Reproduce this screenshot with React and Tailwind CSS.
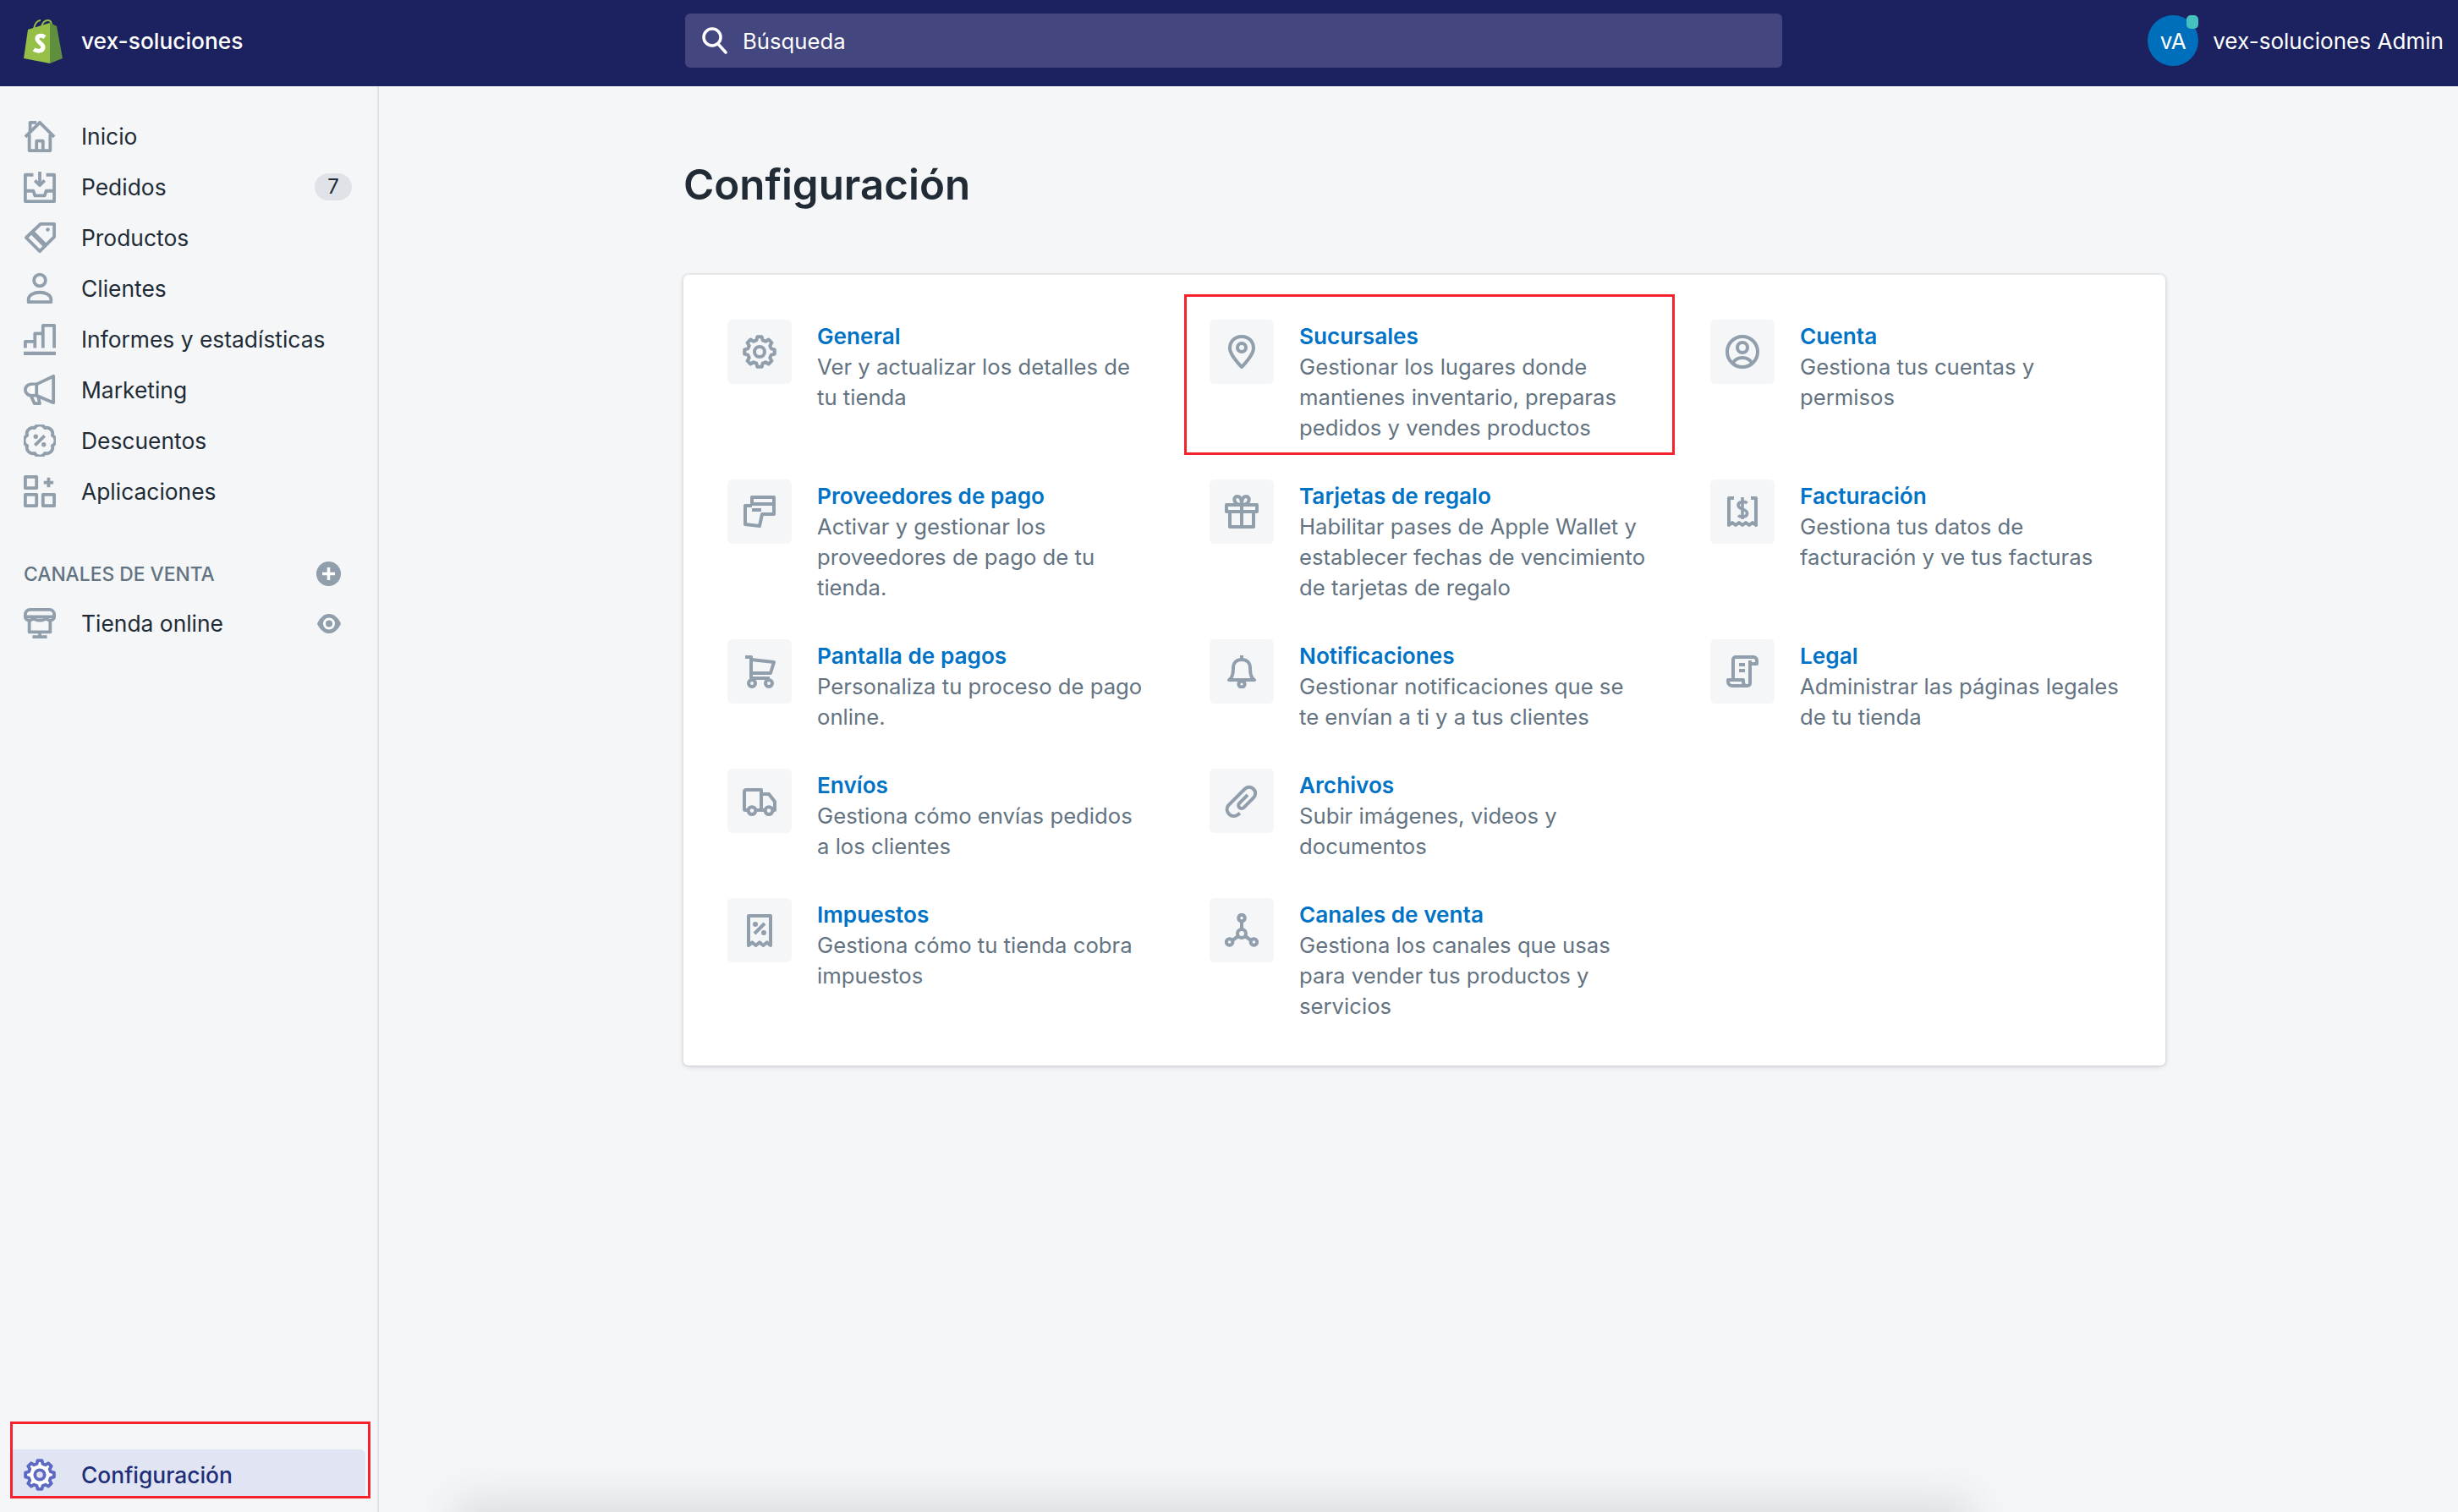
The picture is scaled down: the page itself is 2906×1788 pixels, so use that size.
import React from 'react';

// 8-tooth cog used by General and Configuración
const gearPath = (() => {
  const pts = [];
  for (let i = 0; i < 8; i++) {
    const a = (i * Math.PI) / 4;
    [[-0.26, 7.1], [-0.15, 9], [0.15, 9], [0.26, 7.1]].forEach(([o, r]) => {
      pts.push(`${(10 + r * Math.sin(a + o)).toFixed(2)} ${(10 - r * Math.cos(a + o)).toFixed(2)}`);
    });
  }
  return 'M' + pts.join(' L') + ' Z';
})();

const Ico = ({ children, size = 38, className = 'text-[#919eab]' }) => (
  <svg
    viewBox="0 0 20 20"
    width={size}
    height={size}
    fill="none"
    stroke="currentColor"
    strokeWidth="2"
    strokeLinejoin="round"
    className={`shrink-0 ${className}`}
  >
    {children}
  </svg>
);

const dot = (cx, cy, r = 1.2) => <circle cx={cx} cy={cy} r={r} fill="currentColor" stroke="none" />;

const Glyphs = {
  home: <><path d="M1 10.5 10 1.5l9 9" /><path d="M4 7.5V1.5h4" /><path d="M3.5 9v10h13V9" /><path d="M8 19v-6h4v6" /></>,
  orders: <><path d="M6 2.5H1V19h18V2.5h-5" /><path d="M1 12.5h5l1 3h6l1-3h5" /><path d="M10 0.5V9M7 6l3 3 3-3" /></>,
  tag: <><path d="M1.5 10 10.5 1.5H19V9.5L10 18.5Z" /><path d="M5 6.5 13.5 15" strokeWidth="3" />{dot(15, 5)}</>,
  customers: <><circle cx="10" cy="5" r="3.6" /><path d="M3 18.5h14V17c0-3-3.5-4.5-7-4.5S3 14 3 17Z" /></>,
  reports: <><path d="M1 15.5v-4h6v-5h5V1.500h7V15.500M7 11.500v4M12 6.500v9" /><path d="M0.500 19h19" strokeWidth="2.500" strokeLinecap="round" /></>,
  marketing: <><path d="M18.5 1.5V18L8 13.5H4.5a3.5 3.5 0 0 1 0-7H8Z" /><path d="M4.5 7.5 8 7v5.5H4.5Z" fill="#fff" stroke="none" /><path d="M8 6.5v7M4.5 13.5l2.2 5H10l-1-4.5" /></>,
  discounts: <><path d="M6.8 2.2a3.6 3.6 0 0 1 6.4 0 3.6 3.6 0 0 1 4.6 4.6 3.6 3.6 0 0 1 0 6.4 3.6 3.6 0 0 1-4.6 4.6 3.6 3.6 0 0 1-6.4 0 3.6 3.6 0 0 1-4.6-4.6 3.6 3.6 0 0 1 0-6.4 3.6 3.6 0 0 1 4.6-4.6Z" /><path d="M7 13l6-6" />{dot(7.5, 7.5, 1.4)}{dot(12.5, 12.5, 1.4)}</>,
  apps: <><rect x="1" y="1" width="7" height="7" /><rect x="1" y="12" width="7" height="7" /><rect x="12" y="12" width="7" height="7" /><path d="M15.5 1.5v6M12.5 4.5h6" /></>,
  store: <><path d="M4 1.5h12a3 3 0 0 1 3 3V6H1V4.5a3 3 0 0 1 3-3Z" /><path d="M6 6c0 3-5 3-5 0M14 6c0 3 5 3 5 0M6 6c0 3 8 3 8 0" /><path d="M3.5 9v6.5h13V9M10 15.5v3M5.5 18.5h9" /></>,
  gear: <><path d={gearPath} /><circle cx="10" cy="10" r="3" /></>,
  pin: <><path d="M10 1C5.5 1 3 4.3 3 8c0 4 7 11 7 11s7-7 7-11c0-3.7-2.5-7-7-7Z" /><circle cx="10" cy="7.5" r="2.5" /></>,
  account: <><circle cx="10" cy="10" r="9" /><circle cx="10" cy="7.5" r="3" /><path d="M4.5 16.5c1.5-2.5 3.5-3 5.5-3s4 .5 5.5 3" /></>,
  payment: <><path d="M5.5 6V1.5h13V11.5h-7L10 18.5l-8.5-1V6.5h4" /><path d="M5.5 5.5h13M5.5 9H11" /></>,
  gift: <><path d="M1 6h18v4H1Z" /><path d="M3 10v9h14v-9M10 6v13" /><path d="M10 6C5 6 4.5 1 7.5 1 9.5 1 10 4 10 6c0-2 .5-5 2.5-5C15.5 1 15 6 10 6Z" /></>,
  billing: <><path d="M5 2H2v16l2-1.5 2 1.5 2-1.5 2 1.5 2-1.5 2 1.5 2-1.5 2 1.5V2h-3" /><path d="M12.8 5C11.5 3.8 7.5 3.8 7.5 6.3c0 2.7 5.3 1.8 5.3 4.7 0 2.5-3.8 2.5-5.3 1.3M10 1.5v13" strokeWidth="1.8" /></>,
  legal: <><path d="M16.5 1.5H6A1.5 1.5 0 0 0 4.5 3v12" /><path d="M16.5 1.5a2 2 0 0 1 2 2v2h-4M14.5 3.5V17a1.5 1.5 0 0 1-1.5 1.5H4A2.5 2.5 0 0 1 1.5 16v-1h9v1.5a2 2 0 0 0 2 2" /><path d="M8 6h3.5M8 9.5h3.5" /></>,
  cart: <><path d="M1.5 1.5H5V14h11" /><path d="M5 3l13.5 1.5L16.5 11H5" /><circle cx="5.5" cy="17" r="2" /><circle cx="15.5" cy="17" r="2" /></>,
  truck: <><path d="M3.5 15.5H1.5A.5.5 0 0 1 1 15V4.5A1 1 0 0 1 2 3.5h9v12H7.5" /><path d="M11 6h4.5l3.5 4.5V15.5h-1.5M13.5 15.5H11" /><circle cx="5.5" cy="15.8" r="2.2" /><circle cx="15.5" cy="15.8" r="2.2" /></>,
  taxes: <><path d="M3.5 1.5h13V19l-2.2-1.8-2.1 1.8-2.2-1.8L7.8 19l-2.1-1.8L3.5 19Z" /><path d="M7 12l6-6" />{dot(7.5, 6.5, 1.5)}{dot(12.5, 11.5, 1.5)}</>,
  bell: <><path d="M10 .5V3" /><path d="M2.5 15c2-1 2.5-3.5 2.5-7 0-3 2-5 5-5s5 2 5 5c0 3.5.5 6 2.5 7Z" /><circle cx="10" cy="17.5" r="1.8" /></>,
  clip: <path d="M9 17.3 7.6 18.3A4 4 0 0 1 2 12.8L11.8 3A3.6 3.6 0 0 1 17 8.2L11.3 13.9A1.8 1.8 0 0 1 8.6 11.4L13.5 6.5" />,
  channels: <><circle cx="10" cy="2.8" r="1.9" /><circle cx="2.8" cy="17" r="1.9" /><circle cx="17.2" cy="17" r="1.9" /><circle cx="10" cy="12" r="2.5" /><path d="M10 4.7v4.8M4.5 16l3.5-2.5M15.5 16 12 13.5" /></>,
};

const navItems = [
  { label: 'Inicio', icon: 'home' },
  { label: 'Pedidos', icon: 'orders', badge: '7' },
  { label: 'Productos', icon: 'tag' },
  { label: 'Clientes', icon: 'customers' },
  { label: 'Informes y estadísticas', icon: 'reports' },
  { label: 'Marketing', icon: 'marketing' },
  { label: 'Descuentos', icon: 'discounts' },
  { label: 'Aplicaciones', icon: 'apps' },
];

const settings = [
  { title: 'General', icon: 'gear', lines: ['Ver y actualizar los detalles de', 'tu tienda'] },
  { title: 'Sucursales', icon: 'pin', lines: ['Gestionar los lugares donde', 'mantienes inventario, preparas', 'pedidos y vendes productos'], marked: true },
  { title: 'Cuenta', icon: 'account', lines: ['Gestiona tus cuentas y', 'permisos'] },
  { title: 'Proveedores de pago', icon: 'payment', lines: ['Activar y gestionar los', 'proveedores de pago de tu', 'tienda.'] },
  { title: 'Tarjetas de regalo', icon: 'gift', lines: ['Habilitar pases de Apple Wallet y', 'establecer fechas de vencimiento', 'de tarjetas de regalo'] },
  { title: 'Facturación', icon: 'billing', lines: ['Gestiona tus datos de', 'facturación y ve tus facturas'] },
  { title: 'Pantalla de pagos', icon: 'cart', lines: ['Personaliza tu proceso de pago', 'online.'] },
  { title: 'Notificaciones', icon: 'bell', lines: ['Gestionar notificaciones que se', 'te envían a ti y a tus clientes'] },
  { title: 'Legal', icon: 'legal', lines: ['Administrar las páginas legales', 'de tu tienda'] },
  { title: 'Envíos', icon: 'truck', lines: ['Gestiona cómo envías pedidos', 'a los clientes'] },
  { title: 'Archivos', icon: 'clip', lines: ['Subir imágenes, videos y', 'documentos'] },
  { title: '', lines: [] },
  { title: 'Impuestos', icon: 'taxes', lines: ['Gestiona cómo tu tienda cobra', 'impuestos'] },
  { title: 'Canales de venta', icon: 'channels', lines: ['Gestiona los canales que usas', 'para vender tus productos y', 'servicios'] },
];

const ShopifyLogo = () => (
  <svg viewBox="0 0 46 52" width="46" height="52" className="shrink-0 mt-[2px]">
    <path d="M12 11C13 4 17 1 20 1M21 9c1-5 4-8 8-8 3 0 4 3 4 7" fill="none" stroke="#95bf47" strokeWidth="2" />
    <path d="M0 46 5 12 31 4V52Z" fill="#95bf47" />
    <path d="M31 4 39 8 46 46 31 52Z" fill="#5e8e3e" />
    <path d="M25 21c-4-3-10-2-9 2.5s8 5 7 10c-1 4.5-7 4.5-11 2" fill="none" stroke="#fff" strokeWidth="5" />
  </svg>
);

const TopBar = () => (
  <header className="h-[102px] shrink-0 bg-[#1c2260] flex items-center pb-[6px] text-white">
    <div className="w-[810px] shrink-0 pl-7 flex items-center gap-[22px]">
      <ShopifyLogo />
      <span className="pt-[2px] text-[26.3px] font-medium">vex-soluciones</span>
    </div>
    <div className="w-[1297px] h-16 rounded-md bg-[#43467f] flex items-center pl-5 gap-[18px]">
      <svg viewBox="0 0 30 32" width="30" height="32" fill="none" stroke="#fff" strokeWidth="3.5" strokeLinecap="round" className="shrink-0">
        <circle cx="12" cy="12" r="10" />
        <path d="M19 20l9 10" />
      </svg>
      <span className="pt-[2px] text-[25.7px]">Búsqueda</span>
    </div>
    <div className="ml-auto pr-[17px] flex items-center gap-[17px]">
      <div className="relative w-[60px] h-[60px] rounded-full bg-[#006fbb] flex items-center justify-center pt-[2px] text-[26.1px]">
        vA
        <span className="absolute top-0 right-0 w-[14px] h-4 rounded-[5px] bg-[#47c1bf]" />
      </div>
      <span className="pt-[2px] text-[26.1px]">vex-soluciones Admin</span>
    </div>
  </header>
);

const NavRow = ({ label, icon, badge }) => (
  <div className="h-[60px] flex items-center pl-7 pr-[30px] text-[26.4px] text-[#212b36]">
    <Ico>{Glyphs[icon]}</Ico>
    <span className="ml-[30px] pt-[1px]">{label}</span>
    {badge && (
      <span className="ml-auto w-11 h-8 rounded-full bg-[#dfe3e8] flex items-center justify-center text-2xl">{badge}</span>
    )}
  </div>
);

const Sidebar = () => (
  <aside className="w-[448px] shrink-0 border-r-2 border-[#dfe3e8] flex flex-col pt-[29px] pb-[18px]">
    {navItems.map((item) => (
      <NavRow key={item.label} {...item} />
    ))}
    <div className="mt-[52px] h-[30px] flex items-center pl-7 pr-[43px] text-[22.8px] font-medium text-[#637381]">
      <span className="pt-[2px]">CANALES DE VENTA</span>
      <svg viewBox="0 0 29 29" width="29" height="29" className="ml-auto">
        <circle cx="14.5" cy="14.5" r="14.5" fill="#919eab" />
        <path d="M14.5 7v15M7 14.5h15" stroke="#fff" strokeWidth="3.5" />
      </svg>
    </div>
    <div className="mt-[14px] h-[60px] flex items-center pl-7 pr-[43px] text-[26.4px] text-[#212b36]">
      <Ico>{Glyphs.store}</Ico>
      <span className="ml-[30px] pt-[1px]">Tienda online</span>
      <svg viewBox="0 0 28 23" width="28" height="23" className="ml-auto">
        <path d="M14 0C6 0 1.5 8 0 11.5 1.5 15 6 23 14 23s12.5-8 14-11.5C26.5 8 22 0 14 0Z" fill="#919eab" />
        <circle cx="14" cy="11.5" r="7" fill="#fff" />
        <circle cx="14" cy="11.5" r="4" fill="#919eab" />
      </svg>
    </div>

    <div className="relative mt-auto ml-[15px] mr-[14px] h-[56px] rounded-tr-md bg-[#e1e4f3] flex items-center pl-[13px] pt-[4px] text-[26.4px] font-medium text-[#202e78]">
      <Ico className="text-[#5c6ac4]">
        <path d={gearPath} fill="#fff" />
        <circle cx="10" cy="10" r="3" fill="#e1e4f3" />
      </Ico>
      <span className="ml-[30px] pt-[2px]">Configuración</span>
      <div className="absolute -left-[3px] -top-[33px] w-[426px] h-[91px] border-[3px] border-[#f5212d]" />
    </div>
  </aside>
);

const SettingCell = ({ title, icon, lines, marked }) => {
  if (!title) return <div />;
  return (
    <div className="relative flex gap-[30px]">
      <div className="w-[76px] h-[76px] shrink-0 rounded-md bg-[#f4f6f8] flex items-center justify-center">
        <Ico size={40}>{Glyphs[icon]}</Ico>
      </div>
      <div className="pt-[2px] leading-9 whitespace-nowrap">
        <div className="text-[26.2px] font-semibold text-[#0073c6]">{title}</div>
        <div className="text-[25.7px] text-[#637381]">
          {lines.map((line) => (
            <div key={line}>{line}</div>
          ))}
        </div>
      </div>
      {marked && <div className="absolute -left-[30px] -top-[30px] w-[580px] h-[190px] border-[3px] border-[#f5212d]" />}
    </div>
  );
};

export default function App() {
  return (
    <div className="relative h-screen flex flex-col overflow-hidden bg-[#f4f6f8] font-['Inter',sans-serif] antialiased">
      <TopBar />
      <div className="flex-1 flex min-h-0">
        <Sidebar />
        <main className="flex-1 pl-[360px] pt-[83px]">
          <h1 className="text-[49.3px] leading-[66px] font-semibold text-[#212b36]">Configuración</h1>
          <div className="mt-[74px] w-[1752px] h-[935px] rounded-md bg-white shadow-[0_0_0_2px_rgba(63,63,68,0.05),0_2px_6px_0_rgba(63,63,68,0.15)] pl-[52px] pt-[53px] grid grid-cols-[570px_592px_1fr] gap-y-[43px] content-start">
            {settings.map((item, i) => (
              <SettingCell key={i} {...item} />
            ))}
          </div>
        </main>
      </div>
      {/* soft shadow bleeding in at the bottom edge of the capture */}
      <div className="absolute left-[540px] w-[1790px] top-[1776px] h-[60px] bg-[#d9dbde] blur-[24px]" />
    </div>
  );
}
